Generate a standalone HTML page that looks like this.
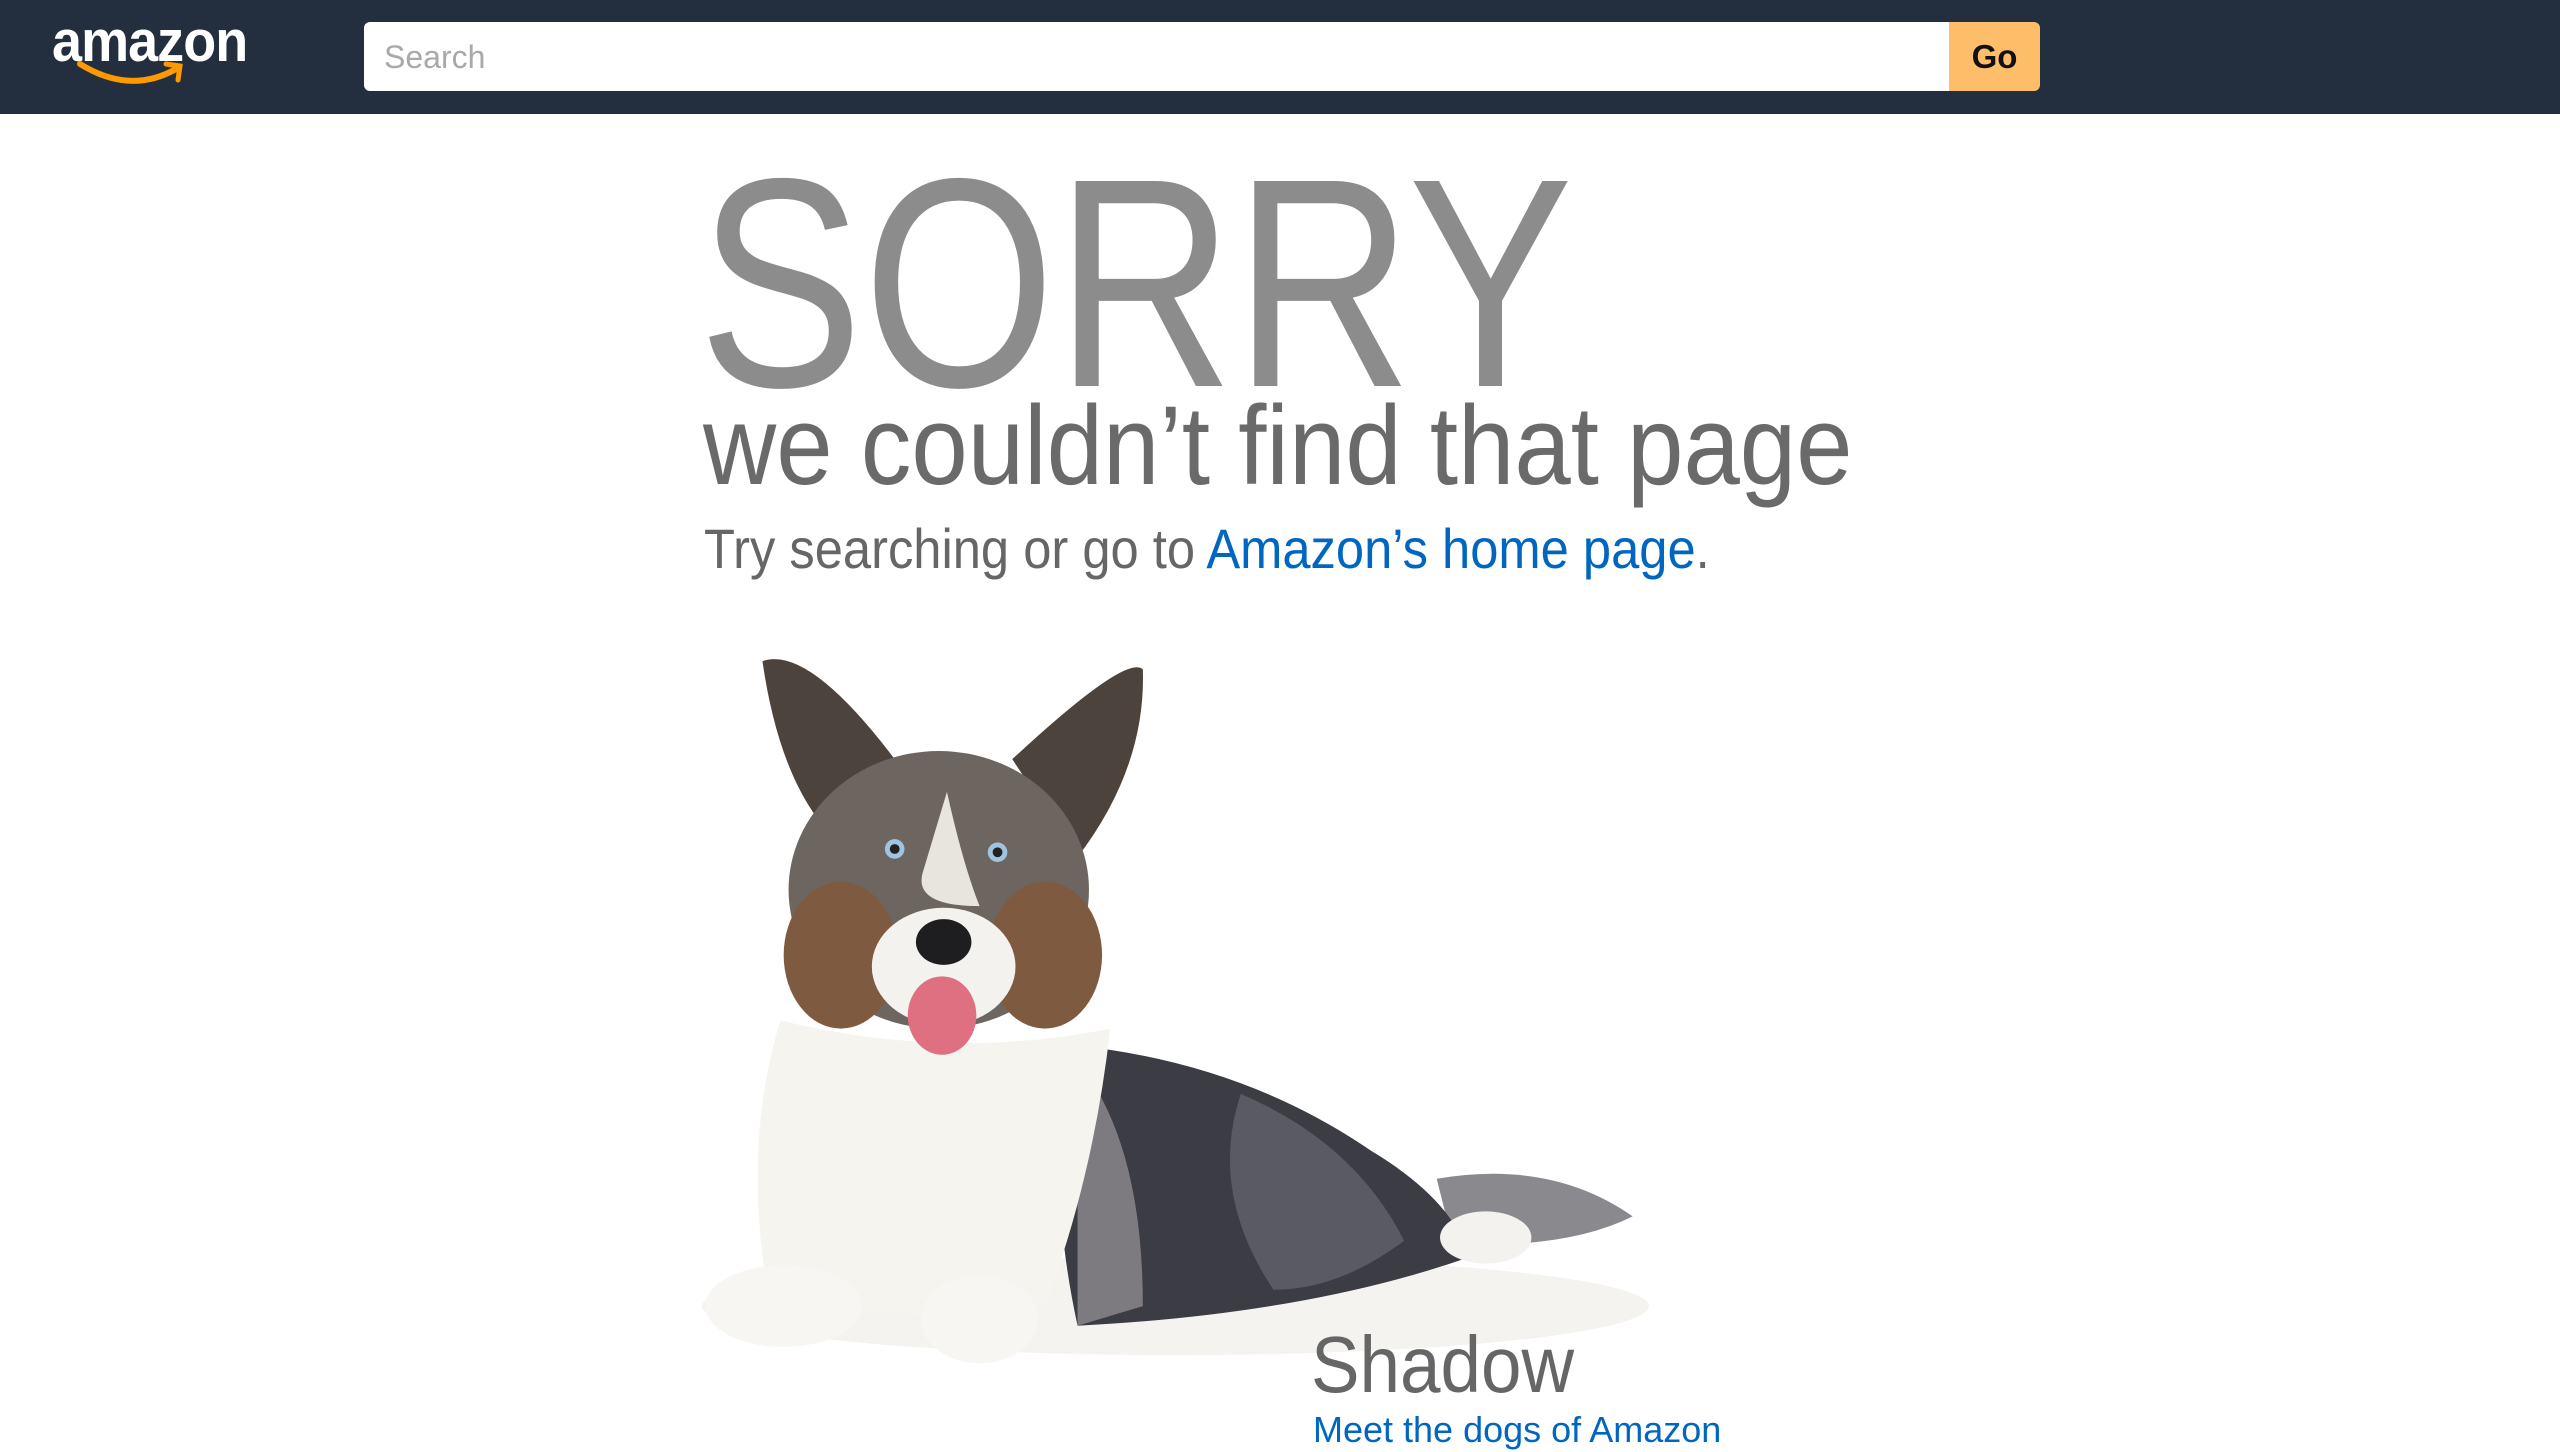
<!DOCTYPE html>
<html><head><meta charset="utf-8"><style>
html,body{margin:0;padding:0;width:2560px;height:1440px;overflow:hidden;background:#fff;font-family:"Liberation Sans",sans-serif}
.hdr{position:absolute;left:0;top:0;width:2560px;height:114px;background:#232f3e}
.logo{position:absolute;left:52px;top:8px;color:#fff;font-weight:bold;font-size:58px;letter-spacing:-1px;transform:scaleX(0.93);transform-origin:left}
.search{position:absolute;left:364px;top:22px;width:1585px;height:69px;background:#fff;border-radius:6px 0 0 6px}
.search span{position:absolute;left:20px;top:17px;font-size:32px;color:#a9a9a9}
.go{position:absolute;left:1949px;top:22px;width:91px;height:69px;background:#febd69;border-radius:0 6px 6px 0;font-weight:bold;font-size:33px;color:#111;text-align:center;line-height:69px}
.t{position:absolute;white-space:nowrap;color:#666;transform-origin:left top}
a{color:#0066c0;text-decoration:none}
</style></head><body>
<div class="hdr"></div>
<div class="logo">amazon</div>
<svg style="position:absolute;left:0;top:0" width="300" height="114"><path d="M80 64 Q130 95 176 69" stroke="#f90" stroke-width="6" fill="none" stroke-linecap="round"/><path d="M166 64 L180 66 L178 80" stroke="#f90" stroke-width="5" fill="none" stroke-linecap="round"/></svg>
<div class="search"><span>Search</span></div>
<div class="go">Go</div>

<svg style="position:absolute;left:0;top:0" width="2560" height="1440" viewBox="0 0 1568 882">
<ellipse cx="720" cy="800" rx="290" ry="30" fill="#f5f3f0"/>
<path d="M880 722 Q950 710 1000 745 Q960 765 890 762 Z" fill="#8a8a8e"/>
<path d="M655 640 Q760 650 840 705 Q890 735 900 770 Q800 805 660 812 Q640 720 655 640Z" fill="#3b3c44"/>
<path d="M760 670 Q830 700 860 760 Q820 790 780 790 Q740 730 760 670Z" fill="#5a5a62"/>
<path d="M660 650 Q700 700 700 800 L660 812Z" fill="#7d7b80"/>
<path d="M478 625 Q580 650 680 630 Q670 720 640 800 Q560 815 470 790 Q455 700 478 625Z" fill="#f6f4ef"/>
<path d="M467 405 Q495 395 548 465 L525 525 Q480 495 467 405Z" fill="#4d433d"/>
<path d="M700 410 Q690 400 620 465 L660 525 Q702 470 700 410Z" fill="#4d433d"/>
<ellipse cx="575" cy="545" rx="92" ry="85" fill="#6d6660"/>
<ellipse cx="515" cy="585" rx="35" ry="45" fill="#7e5a40"/>
<ellipse cx="640" cy="585" rx="35" ry="45" fill="#7e5a40"/>
<path d="M580 485 Q590 530 600 555 Q560 555 565 535Z" fill="#e8e4de"/>
<ellipse cx="578" cy="592" rx="44" ry="36" fill="#f4f2ee"/>
<ellipse cx="578" cy="577" rx="17" ry="14" fill="#1e1e20"/>
<ellipse cx="577" cy="622" rx="21" ry="24" fill="#de7081"/>
<circle cx="548" cy="520" r="6" fill="#9ec4e0"/><circle cx="548" cy="520" r="3" fill="#222"/>
<circle cx="611" cy="522" r="6" fill="#9ec4e0"/><circle cx="611" cy="522" r="3" fill="#222"/>
<ellipse cx="480" cy="800" rx="48" ry="25" fill="#f8f6f2"/>
<ellipse cx="600" cy="808" rx="36" ry="27" fill="#f8f6f2"/>
<ellipse cx="910" cy="758" rx="28" ry="16" fill="#f4f2ee"/>
</svg>

<div class="t" style="left:698px;top:134px;font-size:298px;line-height:300px;color:#8c8c8c;transform:scaleX(0.83)">SORRY</div>
<div class="t" style="left:703px;top:386px;font-size:112px;line-height:120px;color:#6a6a6a;transform:scaleX(0.905)">we couldn’t find that page</div>
<div class="t" style="left:704px;top:516px;font-size:56px;line-height:66px;transform:scaleX(0.905)">Try searching or go to <a>Amazon’s home page</a>.</div>
<div class="t" style="left:1311px;top:1320px;font-size:80px;line-height:90px;color:#666;transform:scaleX(0.91)">Shadow</div>
<div class="t" style="left:1313px;top:1408px;font-size:36px;line-height:44px"><a>Meet the dogs of Amazon</a></div>
</body></html>
